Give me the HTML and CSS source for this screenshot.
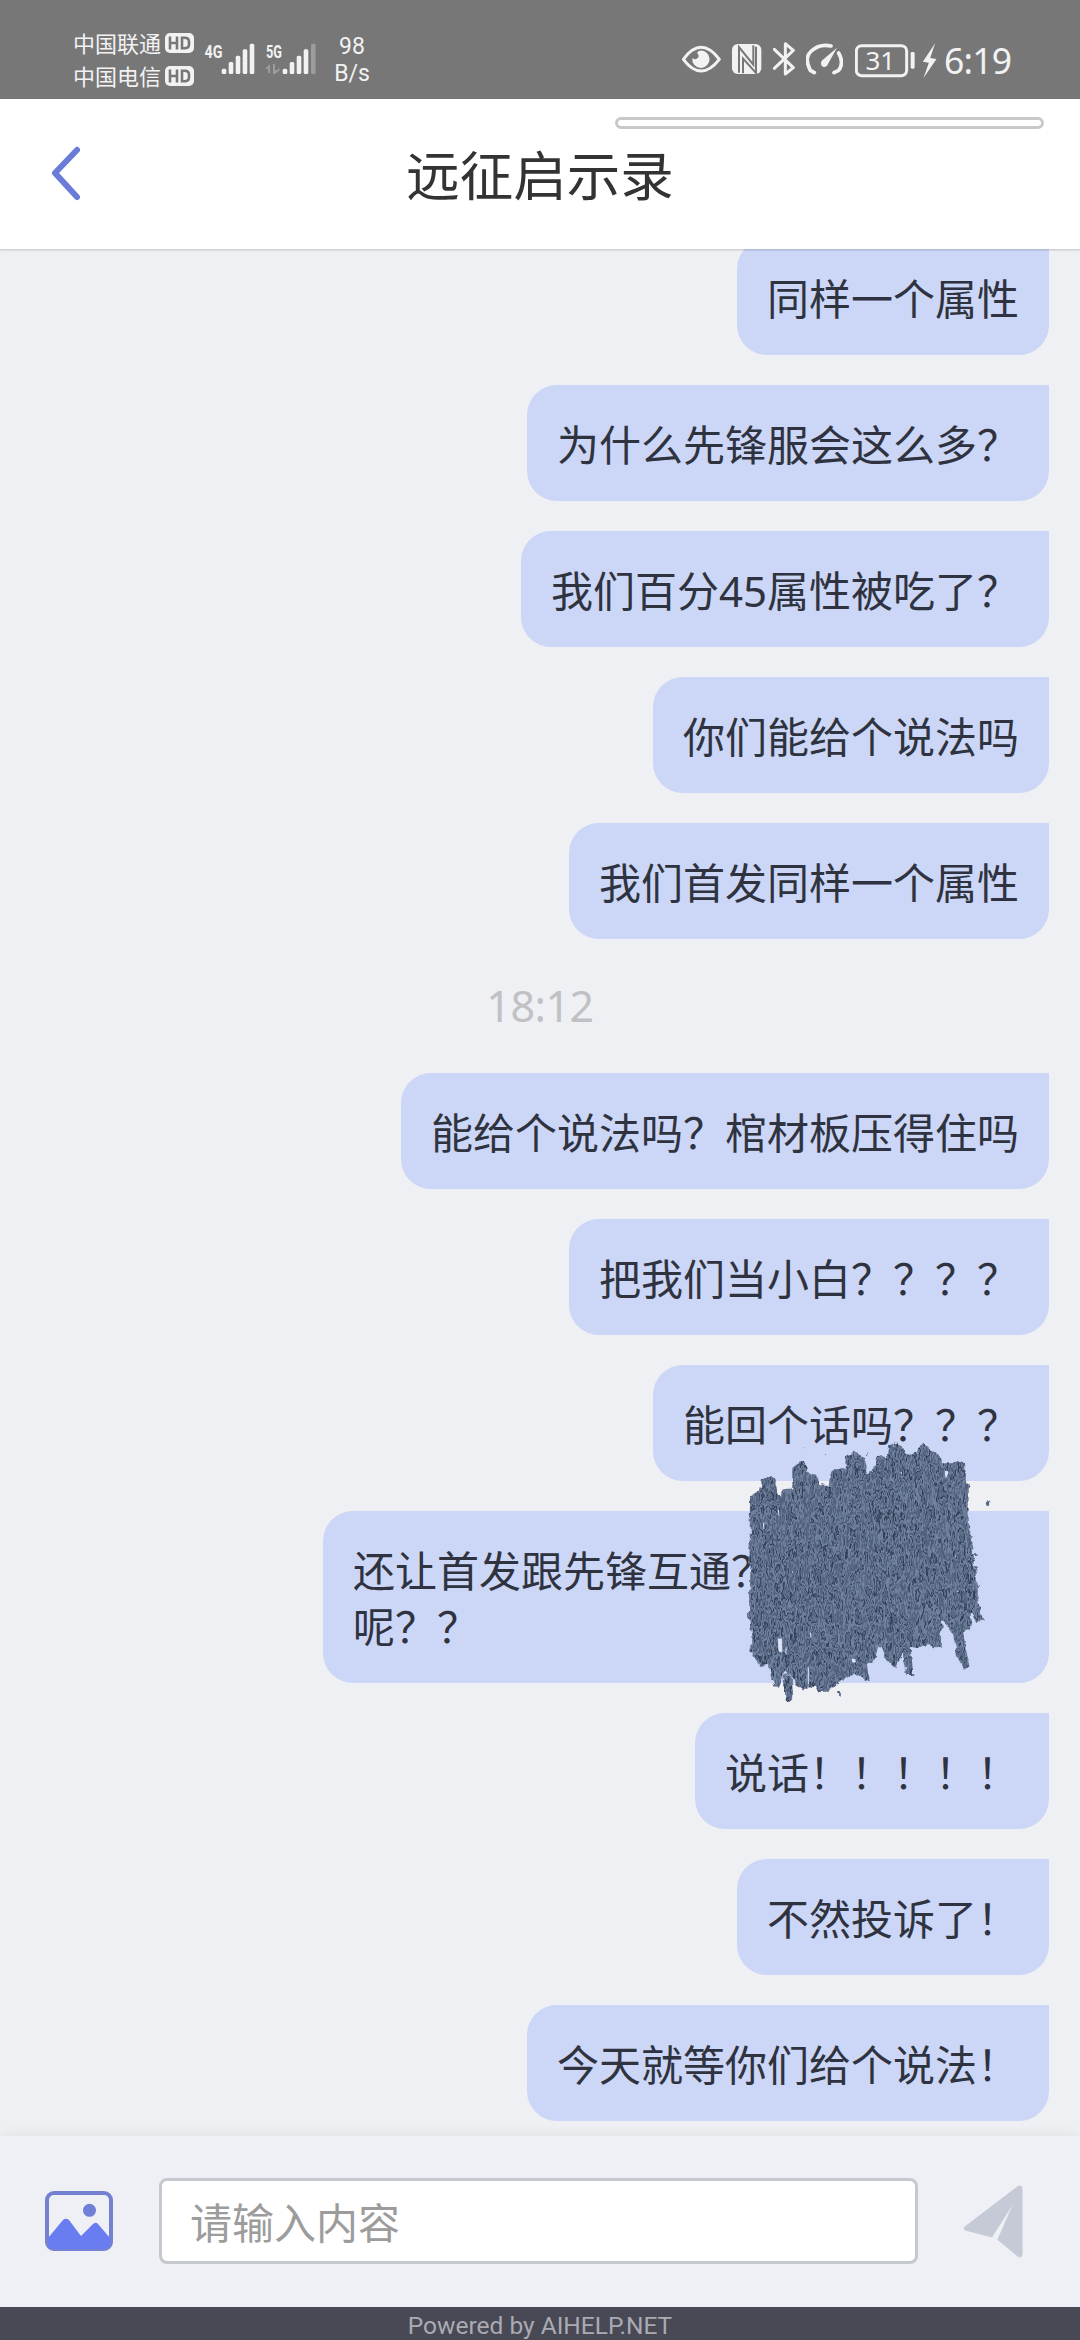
FILE: index.html
```html
<!DOCTYPE html>
<html lang="zh-CN">
<head>
<meta charset="utf-8">
<title>远征启示录</title>
<link rel="stylesheet" href="styles.css">
</head>
<body>
<div class="screen">
  <div class="status">
    <div class="carriers">
      <div class="carrier">中国联通<svg class="hd" viewBox="0 0 29 20"><rect width="29" height="20" rx="5"/><path d="M5 3.500v13M12 3.500v13M5 10h7M17 4.700h2.500q4.500 0 4.500 4v2.600q0 4-4.500 4H17z"/></svg></div>
      <div class="carrier">中国电信<svg class="hd" viewBox="0 0 29 20"><rect width="29" height="20" rx="5"/><path d="M5 3.500v13M12 3.500v13M5 10h7M17 4.700h2.500q4.500 0 4.500 4v2.600q0 4-4.500 4H17z"/></svg></div>
    </div>
    <svg class="signal" viewBox="204 40 52 40"><text x="204.500" y="58" textLength="18" lengthAdjust="spacingAndGlyphs">4G</text><g><rect x="221.700" y="68.700" width="4.600" height="5.300" rx="1.500"/><rect x="228.700" y="62" width="4.600" height="12" rx="1.500"/><rect x="235.700" y="55.700" width="4.600" height="18.300" rx="1.500"/><rect x="242.700" y="49.300" width="4.600" height="24.700" rx="1.500"/><rect x="249.700" y="43.700" width="4.600" height="30.300" rx="1.500"/></g></svg>
    <svg class="signal second" viewBox="265 40 52 40"><text x="266" y="58" textLength="16" lengthAdjust="spacingAndGlyphs">5G</text><path class="dim" d="M265 69l5-5v9h-2v-4zM273 64h2v6h3v-3l2 3-5 4h-2z"/><g><rect x="282.700" y="68.700" width="4.600" height="5.300" rx="1.500"/><rect x="289.700" y="62" width="4.600" height="12" rx="1.500"/><rect x="296.700" y="55.700" width="4.600" height="18.300" rx="1.500"/><rect x="303.700" y="49.300" width="4.600" height="24.700" rx="1.500"/><rect class="dim" x="311" y="43.700" width="4.600" height="30.300" rx="1.500"/></g></svg>
    <div class="speed"><span>98</span><span>B/s</span></div>
    <div class="tray">
      <svg class="eye" viewBox="65 120 117 120"><path class="line" d="M69 178Q122 106 177 178Q122 248 69 178Z"/><path d="M118 152a26 26 0 1 1-22 22q8 7 15 1 8-6 0-15-2-5 7-8z"/></svg>
      <svg class="nfc" viewBox="215 120 90 120"><rect x="215" y="132" width="88" height="90" rx="17"/><path class="cut" d="M236 218V141L279 194V136M236 141M248 220V176L287 219V140"/></svg>
      <svg class="bt" viewBox="337 120 66 120"><path class="line" d="M341 148L398 203L374 222V131L398 151L341 205"/></svg>
      <svg class="gauge" viewBox="437 120 111 120"><path class="thick" d="M462 218L450 211Q430 174 453 153Q478 130 512 138M535 159Q552 188 535 211L521 218"/><path d="M530 143L500 197Q491 205 484 197Q479 189 486 181Z"/></svg>
      <svg class="battery" viewBox="584 120 180 120"><rect class="line" x="588" y="137" width="151" height="90" rx="16"/><rect x="751" y="156" width="12" height="50" rx="4"/><text x="660" y="209" text-anchor="middle">31</text></svg>
      <svg class="bolt" viewBox="786 120 44 120"><path d="M825 130L788 185L806 188L790 234L829 177L810 174Z"/></svg>
      <span class="clock">6:19</span>
    </div>
  </div>

  <div class="header">
    <svg class="back" viewBox="0 0 34 58"><path d="M28 5L6 28L28 52"/></svg>
    <h1 class="title">远征启示录</h1>
    <div class="handle"></div>
  </div>

  <div class="chat">
    <div class="bubble">同样一个属性</div>
    <div class="bubble">为什么先锋服会这么多？</div>
    <div class="bubble">我们百分<span class="num">45</span>属性被吃了？</div>
    <div class="bubble">你们能给个说法吗</div>
    <div class="bubble">我们首发同样一个属性</div>
    <div class="time">18:12</div>
    <div class="bubble">能给个说法吗？棺材板压得住吗</div>
    <div class="bubble">把我们当小白？？？？</div>
    <div class="bubble">能回个话吗？？？</div>
    <div class="bubble wide">还让首发跟先锋互通？<br>呢？？
      <svg class="scribble" viewBox="0 0 960 900">
        <defs>
          <filter id="ink" x="0" y="0" width="960" height="900" filterUnits="userSpaceOnUse" color-interpolation-filters="sRGB">
            <feTurbulence type="fractalNoise" baseFrequency="0.05 0.04" numOctaves="2" seed="4" result="edge"/>
            <feDisplacementMap in="SourceGraphic" in2="edge" scale="22" xChannelSelector="R" yChannelSelector="G" result="shape"/>
            <feTurbulence type="fractalNoise" baseFrequency="0.055 0.016" numOctaves="3" seed="11"/>
            <feColorMatrix values="1 0 0 0 0  1 0 0 0 0  1 0 0 0 0  0 0 0 0 1"/>
            <feComponentTransfer result="grain">
              <feFuncR type="table" tableValues=".36 .36 .34 .38 .30 .44 .40 .18 .46 .38 .30 .42 .46 .18 .38 .32 .42 .22 .40 .40 .40"/>
              <feFuncG type="table" tableValues=".41 .41 .39 .43 .35 .50 .46 .23 .53 .44 .36 .48 .53 .23 .44 .38 .48 .27 .46 .46 .46"/>
              <feFuncB type="table" tableValues=".53 .53 .50 .55 .45 .62 .57 .32 .65 .55 .46 .60 .65 .32 .55 .48 .60 .37 .57 .57 .57"/>
            </feComponentTransfer>
            <feComposite in="grain" in2="shape" operator="in"/>
          </filter>
        </defs>
        <g filter="url(#ink)">
          <path d="M90 228L120 213L125 182L147 168L165 172L178 230L192 208L217 205L217 140L240 124L258 132L262 160L285 160L298 195L325 198L334 155L352 140L374 150L378 106L405 98L430 110L440 160L458 155L465 115L485 104L502 110L508 80L530 68L550 85L555 103L590 98L595 80L615 74L632 92L655 102L665 130L706 130L715 126L735 130L738 180L746 205L746 320L758 350L756 400L770 455L770 520L780 575L792 598L770 603L753 575L750 632L730 630L736 680L748 738L730 746L712 710L700 645L678 610L665 605L662 684L635 685L628 675L590 684L572 682L580 765L562 765L548 700L530 738L505 728L478 680L470 718L440 735L452 782L435 786L420 765L382 770L350 795L325 815L300 816L288 800L260 803L250 809L228 795L215 765L195 755L178 800L160 800L150 735L125 738L105 710L94 690L95 610L87 590Z"/>
          <path class="stroke" d="M203 775L208 830"/>
          <path class="dot" d="M358 817L361 824M804 244L804 252"/>
          <path class="hair" d="M750 405h26M755 438h16M755 498h23M318 103v5M443 101v5M248 83v4M310 188v5"/>
        </g>
        <path class="gap" d="M175 657h10v38l-8-2zM130 308l2 20M198 682v22M396 718h8l2 8h-8zM711 514h4M544 156v5M706 407v5M175 270l2 16M684 156l-8-2 2 18zM272 637v16M218 454v4M265 742v50"/>
      </svg>
    </div>
    <div class="bubble">说话！！！！！</div>
    <div class="bubble">不然投诉了！</div>
    <div class="bubble">今天就等你们给个说法！</div>
  </div>

  <div class="composer">
    <svg class="photo" viewBox="0 0 68 60"><rect x="2" y="2" width="64" height="56" rx="7"/><circle cx="44.500" cy="19.300" r="6.500"/><path d="M3 47L18 29Q21 26.500 24 29L36 45L48 33Q51 30.500 53 33L65 47V53Q65 58 59 58H9Q3 58 3 53Z"/></svg>
    <input class="field" type="text" placeholder="请输入内容">
    <svg class="send" viewBox="914 223 177 220"><path d="M917 347L1075 227Q1089 220 1090 236V434Q1087 444 1077 440L1014 388L1060 283L998 381L920 361Q908 356 917 347Z"/></svg>
  </div>
  <div class="footer"><span>Powered by AIHELP.NET</span></div>
</div>
</body>
</html>
```
FILE: styles.css
```css
* { box-sizing: border-box; }
body {
  margin: 0;
  font-family: "Noto Sans CJK SC", sans-serif;
}
.screen {
  width: 1080px;
  height: 2340px;
  display: flex;
  flex-direction: column;
  overflow: hidden;
  background: #eff0f4;
}
svg { display: block; flex: none; }

.status {
  flex: none;
  height: 99px;
  background: #777;
  color: #f2f2f2;
  display: flex;
  align-items: center;
  padding: 21px 71px 0 73px;
}
.status svg { height: 40px; fill: #f2f2f2; }
.status .line { fill: none; stroke: #f2f2f2; stroke-width: 9; stroke-linejoin: round; stroke-linecap: round; }
.status .thick { fill: none; stroke: #f2f2f2; stroke-width: 11; stroke-linejoin: round; stroke-linecap: round; }
.carriers { width: 121px; padding-bottom: 2px; }
.carrier {
  display: flex;
  align-items: center;
  gap: 4px;
  height: 33px;
  font-size: 22px;
  line-height: 31px;
  white-space: nowrap;
}
.status .hd { width: 29px; height: 20px; }
.hd path { fill: none; stroke: #777; stroke-width: 2.6; }
.signal { width: 52px; margin-left: 10px; }
.signal.second { margin-left: 9px; }
.signal text { font: bold 18px "Roboto", sans-serif; }
.dim { opacity: .3; }
.speed {
  width: 36px;
  margin-left: 17px;
  font: 23px/27px "Roboto", sans-serif;
  display: flex;
  flex-direction: column;
  align-items: center;
}
.tray { margin-left: auto; display: flex; align-items: center; }
.eye { width: 39px; margin-right: 11px; }
.nfc { width: 30px; margin-right: 11px; }
.nfc .cut { fill: none; stroke: #777; stroke-width: 6; }
.bt { width: 22px; margin-right: 11px; }
.gauge { width: 37px; margin-right: 12px; }
.battery { width: 60px; margin-right: 7px; }
.battery text { font: 78px "Noto Sans", sans-serif; }
.bolt { width: 15px; margin-right: 7px; }
.clock { width: 65px; font: 35.5px/40px "Noto Sans", sans-serif; letter-spacing: -.8px; }

.header {
  position: relative;
  z-index: 1;
  flex: none;
  height: 150px;
  background: #fff;
  box-shadow: 0 1px 2px rgba(0, 0, 0, .2);
  display: grid;
  grid-template-columns: 180px 1fr 180px;
  align-items: center;
}
.back { width: 34px; height: 58px; margin-left: 49px; }
.back path { fill: none; stroke: #6a7bd8; stroke-width: 6; stroke-linecap: round; stroke-linejoin: round; }
.title {
  margin: 0 0 2px;
  text-align: center;
  font-size: 53.500px;
  line-height: 70px;
  font-weight: 400;
  color: #333;
}
.handle {
  position: absolute;
  left: 615px;
  top: 18px;
  width: 429px;
  height: 12px;
  border: 3px solid #c9c9c9;
  border-radius: 6px;
}

.chat {
  flex: 1;
  min-height: 0;
  overflow: hidden;
  display: flex;
  flex-direction: column;
  justify-content: flex-end;
  align-items: flex-end;
  gap: 30px;
  padding: 0 31px 15px;
}
.bubble {
  flex: none;
  position: relative;
  padding: 30px;
  border-radius: 30px 0 30px 30px;
  background: #ccd6f6;
  color: #2f3340;
  font-size: 42px;
  line-height: 56px;
  white-space: nowrap;
}
.bubble.wide { width: 726px; }
.num { font-family: "Noto Sans", sans-serif; line-height: 1; }
.time {
  flex: none;
  align-self: center;
  height: 74px;
  font: 43px/74px "Noto Sans", sans-serif;
  letter-spacing: -.5px;
  color: #bfc1c5;
}
.scribble {
  position: absolute;
  left: 397px;
  top: -91px;
  width: 320px;
  height: 300px;
}
.stroke { fill: none; stroke: #55627d; stroke-width: 24; stroke-linecap: round; }
.dot { fill: none; stroke: #55627d; stroke-width: 13; stroke-linecap: round; }
.hair { fill: none; stroke: #55627d; stroke-width: 5; }
.gap { fill: #dfe4f8; stroke: #dfe4f8; stroke-width: 3; }

.composer {
  flex: none;
  height: 171px;
  background: #eff0f5;
  box-shadow: 0 -2px 12px rgba(0, 0, 0, .06);
  display: flex;
  align-items: center;
  gap: 46px;
  padding: 0 57px 1px 45px;
}
.photo { width: 68px; height: 60px; fill: #697cf0; }
.photo rect { fill: none; stroke: #7481d0; stroke-width: 4; }
.photo circle { fill: #7080d8; }
.field {
  flex: 1;
  min-width: 0;
  height: 86px;
  padding: 0 28px 2px;
  border: 3px solid #c6c8d0;
  border-radius: 8px;
  background: #fff;
  font: 42px "Noto Sans CJK SC", sans-serif;
}
.field::placeholder { color: #9c9c9c; opacity: 1; }
.send { width: 59px; height: 73px; fill: #c5cad6; }

.footer {
  flex: none;
  height: 33px;
  padding-top: 4px;
  background: #484954;
  color: #aaabb2;
  text-align: center;
  font: 24.500px/30px "Roboto", sans-serif;
}
```
